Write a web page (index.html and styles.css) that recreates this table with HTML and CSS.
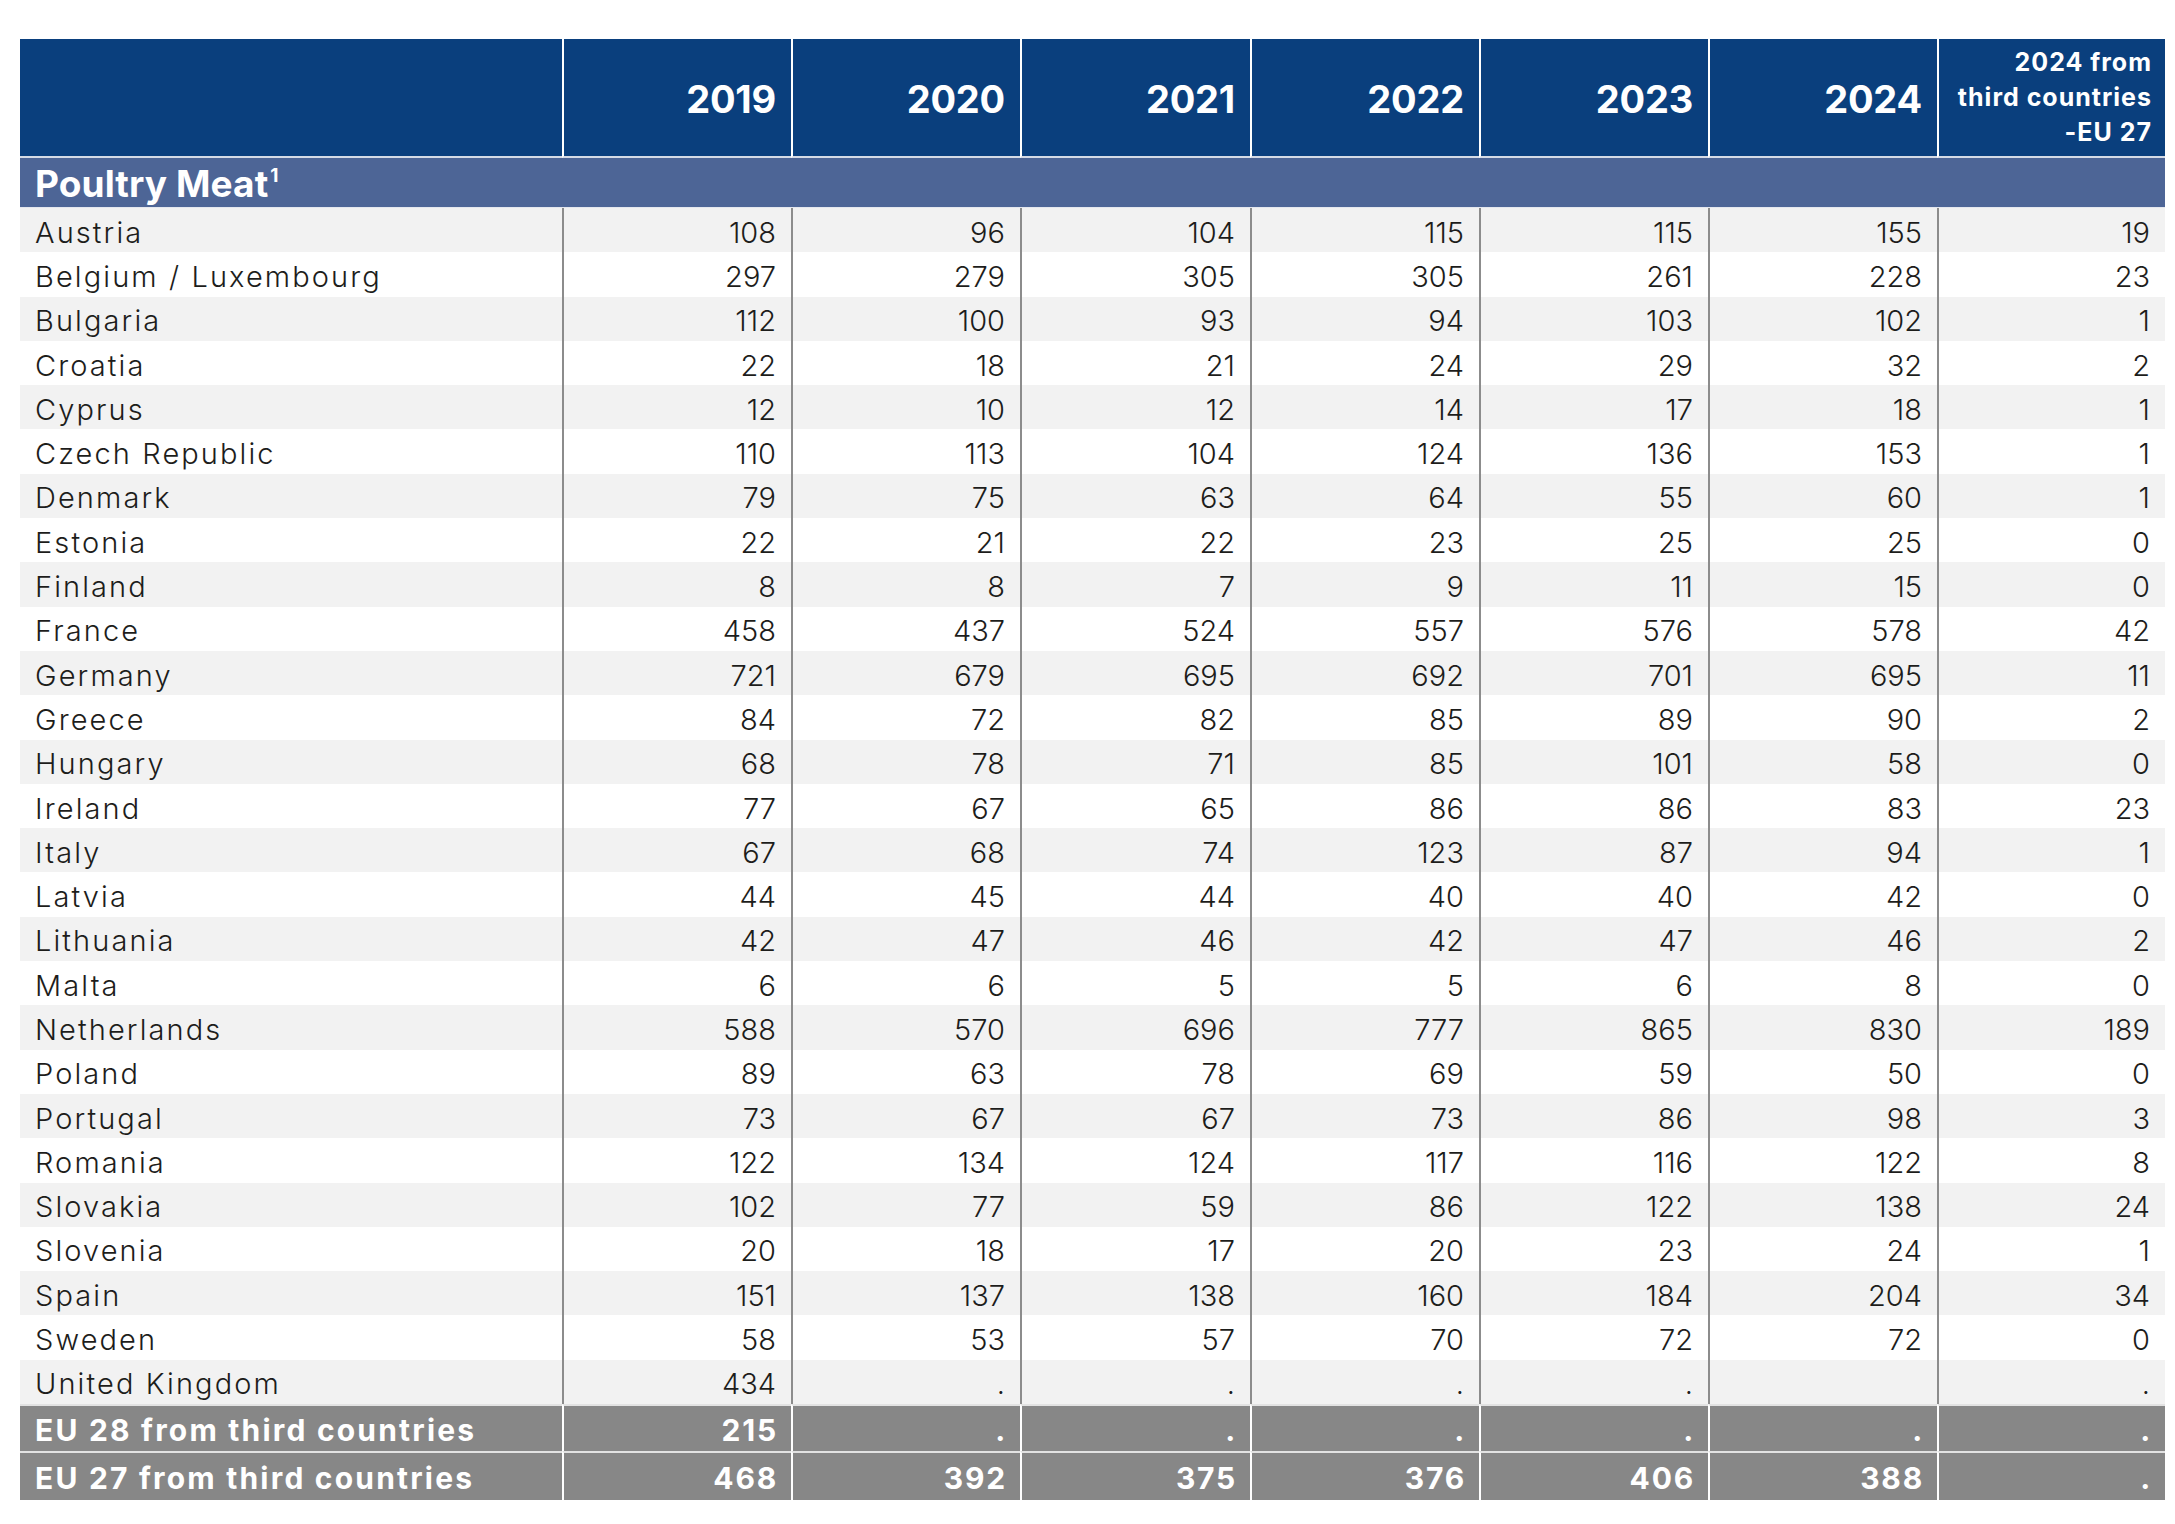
FILE: index.html
```html
<!DOCTYPE html>
<html lang="en">
<head>
<meta charset="utf-8">
<title>Poultry Meat imports</title>
<link rel="stylesheet" href="styles.css">
</head>
<body>
<table class="data">
  <colgroup>
    <col class="c-name">
    <col class="c-y"><col class="c-y"><col class="c-y3"><col class="c-y"><col class="c-y"><col class="c-y">
    <col class="c-last">
  </colgroup>
  <thead>
    <tr class="head">
      <th></th>
      <th>2019</th><th>2020</th><th>2021</th><th>2022</th><th>2023</th><th>2024</th>
      <th class="small">2024 from<br>third countries<br>-EU 27</th>
    </tr>
  </thead>
  <tbody>
    <tr class="section"><td colspan="8">Poultry Meat<sup>1</sup></td></tr>
    <tr class="r"><td>Austria</td><td>108</td><td>96</td><td>104</td><td>115</td><td>115</td><td>155</td><td>19</td></tr>
    <tr class="r"><td>Belgium / Luxembourg</td><td>297</td><td>279</td><td>305</td><td>305</td><td>261</td><td>228</td><td>23</td></tr>
    <tr class="r"><td>Bulgaria</td><td>112</td><td>100</td><td>93</td><td>94</td><td>103</td><td>102</td><td>1</td></tr>
    <tr class="r"><td>Croatia</td><td>22</td><td>18</td><td>21</td><td>24</td><td>29</td><td>32</td><td>2</td></tr>
    <tr class="r"><td>Cyprus</td><td>12</td><td>10</td><td>12</td><td>14</td><td>17</td><td>18</td><td>1</td></tr>
    <tr class="r"><td>Czech Republic</td><td>110</td><td>113</td><td>104</td><td>124</td><td>136</td><td>153</td><td>1</td></tr>
    <tr class="r"><td>Denmark</td><td>79</td><td>75</td><td>63</td><td>64</td><td>55</td><td>60</td><td>1</td></tr>
    <tr class="r"><td>Estonia</td><td>22</td><td>21</td><td>22</td><td>23</td><td>25</td><td>25</td><td>0</td></tr>
    <tr class="r"><td>Finland</td><td>8</td><td>8</td><td>7</td><td>9</td><td>11</td><td>15</td><td>0</td></tr>
    <tr class="r"><td>France</td><td>458</td><td>437</td><td>524</td><td>557</td><td>576</td><td>578</td><td>42</td></tr>
    <tr class="r"><td>Germany</td><td>721</td><td>679</td><td>695</td><td>692</td><td>701</td><td>695</td><td>11</td></tr>
    <tr class="r"><td>Greece</td><td>84</td><td>72</td><td>82</td><td>85</td><td>89</td><td>90</td><td>2</td></tr>
    <tr class="r"><td>Hungary</td><td>68</td><td>78</td><td>71</td><td>85</td><td>101</td><td>58</td><td>0</td></tr>
    <tr class="r"><td>Ireland</td><td>77</td><td>67</td><td>65</td><td>86</td><td>86</td><td>83</td><td>23</td></tr>
    <tr class="r"><td>Italy</td><td>67</td><td>68</td><td>74</td><td>123</td><td>87</td><td>94</td><td>1</td></tr>
    <tr class="r"><td>Latvia</td><td>44</td><td>45</td><td>44</td><td>40</td><td>40</td><td>42</td><td>0</td></tr>
    <tr class="r"><td>Lithuania</td><td>42</td><td>47</td><td>46</td><td>42</td><td>47</td><td>46</td><td>2</td></tr>
    <tr class="r"><td>Malta</td><td>6</td><td>6</td><td>5</td><td>5</td><td>6</td><td>8</td><td>0</td></tr>
    <tr class="r"><td>Netherlands</td><td>588</td><td>570</td><td>696</td><td>777</td><td>865</td><td>830</td><td>189</td></tr>
    <tr class="r"><td>Poland</td><td>89</td><td>63</td><td>78</td><td>69</td><td>59</td><td>50</td><td>0</td></tr>
    <tr class="r"><td>Portugal</td><td>73</td><td>67</td><td>67</td><td>73</td><td>86</td><td>98</td><td>3</td></tr>
    <tr class="r"><td>Romania</td><td>122</td><td>134</td><td>124</td><td>117</td><td>116</td><td>122</td><td>8</td></tr>
    <tr class="r"><td>Slovakia</td><td>102</td><td>77</td><td>59</td><td>86</td><td>122</td><td>138</td><td>24</td></tr>
    <tr class="r"><td>Slovenia</td><td>20</td><td>18</td><td>17</td><td>20</td><td>23</td><td>24</td><td>1</td></tr>
    <tr class="r"><td>Spain</td><td>151</td><td>137</td><td>138</td><td>160</td><td>184</td><td>204</td><td>34</td></tr>
    <tr class="r"><td>Sweden</td><td>58</td><td>53</td><td>57</td><td>70</td><td>72</td><td>72</td><td>0</td></tr>
    <tr class="r"><td>United Kingdom</td><td>434</td><td>.</td><td>.</td><td>.</td><td>.</td><td></td><td>.</td></tr>
    <tr class="total t28"><td>EU 28 from third countries</td><td>215</td><td>.</td><td>.</td><td>.</td><td>.</td><td>.</td><td>.</td></tr>
    <tr class="total t27"><td>EU 27 from third countries</td><td>468</td><td>392</td><td>375</td><td>376</td><td>406</td><td>388</td><td>.</td></tr>
  </tbody>
</table>
</body>
</html>
```

FILE: styles.css
```css
html, body {
  margin: 0;
  padding: 0;
  background: #ffffff;
}

body {
  padding: 39px 10px 20px 20px;
  font-family: "Inter", "Liberation Sans", sans-serif;
  color: #1d1d1b;
}

.data {
  width: 2145px;
  table-layout: fixed;
  border-collapse: separate;
  border-spacing: 0;
}

.c-name { width: 542px; }
.c-y { width: 229px; }
.c-y3 { width: 230px; }
.c-last { width: 228px; }

.data th,
.data td {
  padding: 0 15px 0 15px;
  text-align: right;
  white-space: nowrap;
  overflow: hidden;
}

/* header */
.head th {
  height: 115px;
  background: #0a3f7d;
  color: #ffffff;
  font-weight: 700;
  font-size: 38px;
  letter-spacing: -0.2px;
  vertical-align: middle;
  padding-top: 2px;
  border-bottom: 2px solid #d5dbe6;
  border-left: 2px solid #ffffff;
}

.head th:first-child {
  border-left: none;
}

.head th.small {
  font-size: 25px;
  line-height: 35px;
  letter-spacing: 1px;
  padding-right: 13px;
  padding-top: 0;
  height: 117px;
}

/* section row */
.section td {
  height: 48px;
  background: #4d6596;
  color: #ffffff;
  font-weight: 700;
  font-size: 37px;
  text-align: left;
  letter-spacing: 0.1px;
  border-bottom: 1px solid #e4e7ee;
  vertical-align: middle;
  padding-top: 1px;
}

.section sup {
  font-size: 19px;
  vertical-align: 15px;
  line-height: 0;
  margin-left: 2px;
}

/* body rows */
.r td {
  height: 44.3px;
  font-size: 29px;
  font-weight: 300;
  line-height: 1;
  vertical-align: middle;
  padding-top: 4px;
  box-sizing: border-box;
  border-left: 2px solid #8c8c8c;
}

.r td:first-child {
  text-align: left;
  letter-spacing: 2.1px;
  border-left: none;
}

.r:nth-child(even) td {
  background: #f2f2f2;
}

.r:nth-child(odd) td {
  background: #ffffff;
}

/* totals */
.total td {
  background: #878787;
  color: #ffffff;
  font-weight: 700;
  font-size: 30px;
  letter-spacing: 1.8px;
  padding-right: 13px;
  padding-top: 2px;
  vertical-align: middle;
  border-top: 2px solid #e2e2e2;
  border-left: 2px solid #ffffff;
}

.total td:first-child {
  text-align: left;
  letter-spacing: 2.2px;
  border-left: none;
}

.t28 td { height: 43px; }
.t27 td { height: 45px; }
```
